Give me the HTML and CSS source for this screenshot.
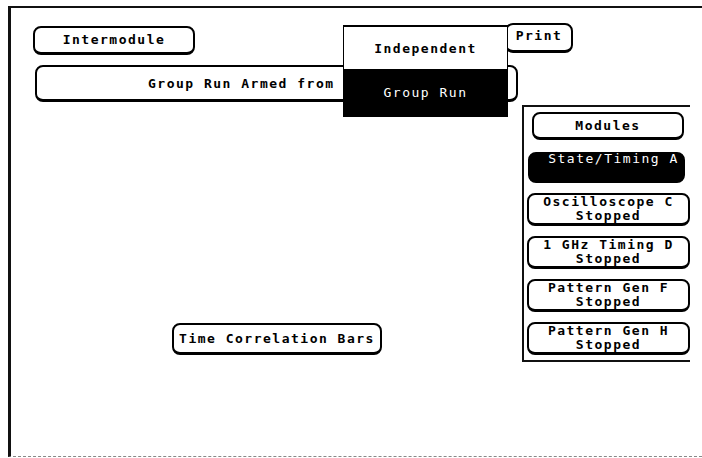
FILE: index.html
```html
<!DOCTYPE html>
<html>
<head>
    <title>Intermodule</title>
    <link rel="stylesheet" href="styles.css">
</head>
<body>
    <div class="screen">
        <div class="top-row">
            <div class="key intermodule">Intermodule</div>
            <div class="key print">Print</div>
        </div>
        <div class="key group-bar">Group Run Armed from RUN</div>
        <div class="main">
            <div class="canvas">
                <div class="key correlation">Time Correlation Bars</div>
            </div>
            <div class="modules">
                <div class="key modules-title">Modules</div>
                <div class="key module active"><span>State/Timing A</span><span>&nbsp;</span></div>
                <div class="key module"><span>Oscilloscope C</span><span>Stopped</span></div>
                <div class="key module"><span>1 GHz Timing D</span><span>Stopped</span></div>
                <div class="key module"><span>Pattern Gen F</span><span>Stopped</span></div>
                <div class="key module"><span>Pattern Gen H</span><span>Stopped</span></div>
            </div>
        </div>
        <!-- popup menu opened over the group run field -->
        <div class="popup">
            <div class="popup-item">Independent</div>
            <div class="popup-item selected">Group Run</div>
        </div>
    </div>
</body>
</html>
```

FILE: styles.css
```css
body {
    margin: 0;
    padding: 0;
    background-color: #ffffff;
    color: #000000;
    font-family: "DejaVu Sans Mono", "Liberation Mono", monospace;
    font-size: 13px;
    font-weight: bold;
    letter-spacing: 1.5px;
}
.screen {
    position: relative;
    box-sizing: border-box;
    margin: 6px 0 0 8px;
    width: 694px;
    height: 451px;
    border-top: 2px solid #111;
    border-left: 3px solid #111;
    border-bottom: 1px dashed #888;
}
.key {
    box-sizing: border-box;
    border: 2px solid #000;
    border-bottom-width: 3px;
    border-radius: 8px;
    display: flex;
    align-items: center;
    justify-content: center;
    background-color: #ffffff;
    white-space: nowrap;
    flex-shrink: 0;
}
.top-row {
    display: flex;
    align-items: flex-start;
    padding-top: 15px;
}
.intermodule {
    margin: 3px 0 0 22px;
    width: 162px;
    height: 29px;
    padding-bottom: 2px;
}
.print {
    margin-left: 310px;
    width: 68px;
    height: 30px;
    padding-bottom: 4px;
}
.group-bar {
    margin: 10px 0 0 24px;
    width: 483px;
    height: 37px;
    justify-content: flex-start;
    padding-left: 111px;
}
.main {
    display: flex;
    align-items: flex-start;
}
.canvas {
    width: 511px;
}
.correlation {
    margin: 221px 0 0 161px;
    width: 210px;
    height: 32px;
}
.modules {
    box-sizing: border-box;
    margin-top: 3px;
    width: 168px;
    height: 257px;
    border-top: 2px solid #111;
    border-left: 2px solid #111;
    border-bottom: 2px solid #111;
    padding: 5px 0 0 3px;
    display: flex;
    flex-direction: column;
}
.modules-title {
    margin: 0 0 12px 5px;
    width: 152px;
    height: 28px;
}
.module {
    width: 163px;
    height: 33px;
    margin-bottom: 10px;
    flex-direction: column;
    line-height: 14px;
}
.module:last-child {
    margin-bottom: 0;
}
.module.active {
    margin-left: 1px;
    width: 157px;
    height: 31px;
    background-color: #000;
    color: #fff;
    font-weight: normal;
    padding-left: 14px;
    padding-bottom: 2px;
}
.popup {
    position: absolute;
    left: 332px;
    top: 17px;
    width: 163px;
    border: 1px solid #000;
    border-top-width: 2px;
    background-color: #ffffff;
}
.popup-item {
    height: 42px;
    display: flex;
    align-items: center;
    justify-content: center;
    box-sizing: border-box;
}
.popup-item.selected {
    height: 47px;
    background-color: #000;
    color: #fff;
    font-weight: normal;
}
```
